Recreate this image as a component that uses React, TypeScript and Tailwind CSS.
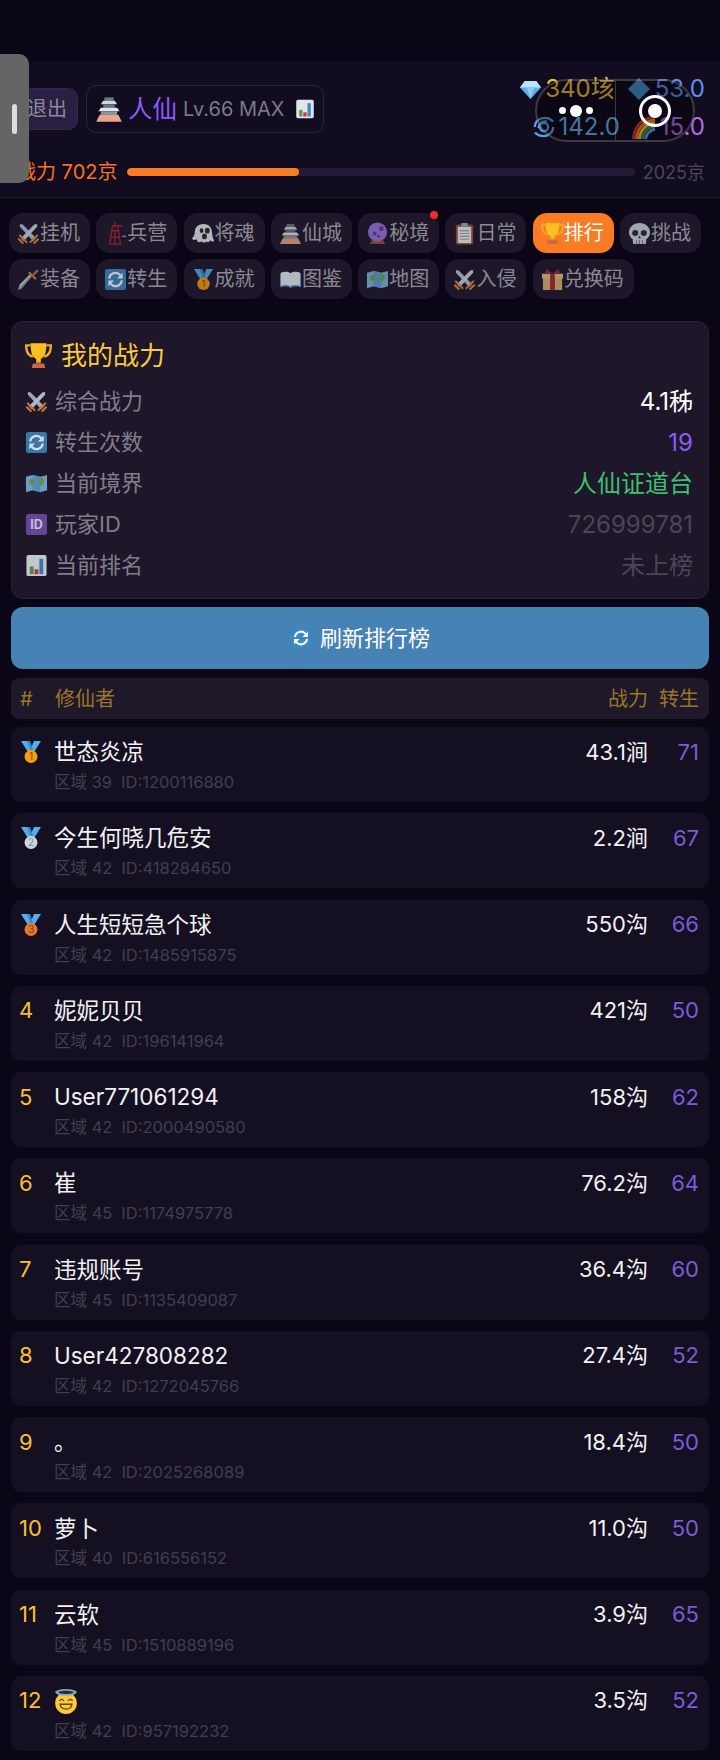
import React from "react"

type IconName =
  | "swords" | "tower" | "ghost" | "castle" | "ball" | "clipboard" | "trophy" | "skull"
  | "dagger" | "cycle" | "book" | "map" | "gift" | "id" | "chart" | "gem" | "diamond"
  | "swirl" | "rainbow" | "halo" | "medal1" | "medal2" | "medal3"

const medalFill: Record<string, string> = { "1": "#f59e0b", "2": "#ccd6dd", "3": "#e8762d" }

const Medal = ({ n }: { n: string }) => (
  <>
    <path d="M2 1h7l3 7 3-7h7l-7.500 12h-5z" fill="#55acee" />
    <path d="M8 1h3l3 8-2 3z" fill="#3b88c3" />
    <circle cx="12" cy="16.500" r="6.500" fill={medalFill[n]} />
    <text x="12" y="20" textAnchor="middle" fontSize="10" fill={n === "2" ? "#7b8a94" : "#7a4a06"} fontFamily="Inter">{n}</text>
  </>
)

const Icon = ({ name, className }: { name: IconName; className?: string }) => {
  return (
    <svg viewBox="0 0 24 24" className={className}>
      {name === "swords" && (
        <>
          <path d="M3 2l3 .5L20 17l-3 3L3 5z" fill="#b8c4d0" />
          <path d="M21 2l-3 .5L4 17l3 3L21 5z" fill="#ccd6dd" />
          <path d="M2 18l4 4M22 18l-4 4M3 14l7 7M21 14l-7 7" stroke="#d98a3d" strokeWidth="2.200" strokeLinecap="round" />
        </>
      )}
      {name === "tower" && (
        <>
          <path d="M9 4h5l1 5 1 7 1 7H6l1-7 1-7z" fill="none" stroke="#8f1f2e" strokeWidth="1.800" />
          <path d="M11.500 0v5M7 9h9M6 16h11M11.500 9v14M9 4h10" stroke="#a3222f" strokeWidth="1.600" />
          <path d="M19 15h4" stroke="#9a96a4" strokeWidth="1.600" />
        </>
      )}
      {name === "ghost" && (
        <>
          <path d="M12 2c6 0 9 4 9 10 0 4 2 6 2 8-2 1-3 0-4-1-1 2-3 3-4 1-1 2-4 2-5 0-2 2-5 1-5-2-2 1-4 1-5-1 2-2 3-4 3-7 0-5 4-8 9-8z" fill="#e8eaed" />
          <ellipse cx="10" cy="9" rx="2" ry="2.500" fill="#292f33" />
          <ellipse cx="16" cy="9" rx="2.500" ry="3" fill="#292f33" />
          <ellipse cx="13" cy="15" rx="2.500" ry="3" fill="#292f33" />
        </>
      )}
      {name === "castle" && (
        <>
          <path d="M8 2h8v3H8z" fill="#66757f" />
          <path d="M7 5h10l2 3H5z" fill="#ccd6dd" />
          <path d="M7 8h10v3H7z" fill="#66757f" />
          <path d="M5 11h14l2 3H3z" fill="#e1e8ed" />
          <path d="M5 14h14v3H5z" fill="#8899a6" />
          <path d="M4 17h16l3 6H1z" fill="#e8a68a" />
        </>
      )}
      {name === "ball" && (
        <>
          <path d="M6 19h12l2 4H4z" fill="#a0522d" />
          <circle cx="12" cy="10.500" r="10" fill="#9a75d8" />
          <circle cx="16" cy="7" r="2.500" fill="#5c3d99" />
          <circle cx="9" cy="12" r="2" fill="#5c3d99" />
          <circle cx="13" cy="15" r="1.500" fill="#5c3d99" />
        </>
      )}
      {name === "clipboard" && (
        <>
          <rect x="3" y="2.500" width="18" height="21" rx="2" fill="#a0522d" />
          <rect x="5" y="5" width="14" height="17" fill="#f1f2f3" />
          <rect x="8.500" y="1" width="7" height="4" rx="1" fill="#99aab5" />
          <path d="M7 9h10M7 12h10M7 15h10M7 18h10" stroke="#99aab5" strokeWidth="1.300" />
        </>
      )}
      {name === "trophy" && (
        <>
          <path d="M5 3H1c0 5 1 9 6 10M19 3h4c0 5-1 9-6 10" fill="none" stroke="#f5a623" strokeWidth="2.200" />
          <path d="M5 1h14c0 8-1 12-5 14v3h-4v-3C6 13 5 9 5 1z" fill="#fbbf24" />
          <path d="M10 17h4v2h-4z" fill="#e8961a" />
          <path d="M7 19h10l1 4H6z" fill="#c9694b" />
        </>
      )}
      {name === "skull" && (
        <>
          <path d="M12 1c6 0 11 4 11 10 0 3-2 6-4 7v3c0 1.500-1 2-2 2H7c-1 0-2-.5-2-2v-3c-2-1-4-4-4-7C1 5 6 1 12 1z" fill="#ccd6dd" />
          <circle cx="7.500" cy="11.500" r="3.200" fill="#292f33" />
          <circle cx="16.500" cy="11.500" r="3.200" fill="#292f33" />
          <path d="M12 14l-1.500 3h3z" fill="#292f33" />
          <path d="M9 19v4M12 19v4M15 19v4" stroke="#66757f" />
        </>
      )}
      {name === "dagger" && (
        <>
          <path d="M1 23l2-6 11-11 2 2L5 21z" fill="#c4ced6" />
          <path d="M1 23L15 7l1 1L5 21z" fill="#8899a6" />
          <path d="M13 5l6 6" stroke="#d98a3d" strokeWidth="2.200" strokeLinecap="round" />
          <path d="M16 8l5-5" stroke="#c1694f" strokeWidth="2.600" strokeLinecap="round" />
        </>
      )}
      {name === "cycle" && (
        <>
          <rect x="1" y="1" width="22" height="22" rx="2.500" fill="#3b88c3" />
          <path d="M5.500 11a6.500 6.500 0 0 1 11.500-3.500M18.500 13A6.500 6.500 0 0 1 7 16.500" fill="none" stroke="#fff" strokeWidth="2.300" />
          <path d="M19.500 5v6h-6zM4.500 19v-6h6z" fill="#fff" />
        </>
      )}
      {name === "book" && (
        <>
          <path d="M1 6c4-2 8-2 11 0 3-2 7-2 11 0v14c-4-1-8-1-11 1-3-2-7-2-11-1z" fill="#5b94c4" />
          <path d="M2 5c4-1.500 7-1.500 10 .5V19c-3-1.500-6-1.500-10-.5zM22 5c-4-1.500-7-1.500-10 .5V19c3-1.500 6-1.500 10-.5z" fill="#e9eef2" />
        </>
      )}
      {name === "map" && (
        <>
          <path d="M1 5l7-2 8 2 7-2v16l-7 2-8-2-7 2z" fill="#7fb4dc" />
          <path d="M8 3l8 2v16l-8-2z" fill="#5d9fd0" />
          <path d="M4 8l4-1 2 3-2 4-3-1zM14 7l5-1 1 5-4 4-2-3z" fill="#6aa55a" />
        </>
      )}
      {name === "gift" && (
        <>
          <rect x="2" y="9" width="20" height="14" fill="#dcb36d" />
          <rect x="1" y="6" width="22" height="5" fill="#e5c07b" />
          <rect x="9.500" y="6" width="5" height="17" fill="#a8283a" />
          <path d="M12 6L6 1 4 5zM12 6l6-5 2 4z" fill="#a8283a" />
        </>
      )}
      {name === "id" && (
        <>
          <rect x="1" y="1" width="22" height="22" rx="2.500" fill="#744eaa" />
          <text x="12" y="17" textAnchor="middle" fontSize="13" fontWeight="700" fill="#e6dff0" fontFamily="Inter">ID</text>
        </>
      )}
      {name === "chart" && (
        <>
          <rect x="1.500" y="1" width="21" height="22" rx="2" fill="#dfe5ea" />
          <rect x="5" y="13" width="4" height="8" fill="#5c9a4c" />
          <rect x="10" y="16" width="4" height="5" fill="#dd2e44" />
          <rect x="15" y="5" width="4" height="16" fill="#3b88c3" />
        </>
      )}
      {name === "gem" && (
        <>
          <path d="M6 3h12l5 7-11 12L1 10z" fill="#5dadec" />
          <path d="M6 3h12l5 7H1z" fill="#bde3fb" />
          <path d="M8 10h8l-4 12z" fill="#8ccaf7" />
        </>
      )}
      {name === "diamond" && <path d="M12 1l11 11-11 11L1 12z" fill="#4a8cc8" />}
      {name === "swirl" && (
        <g fill="none" stroke="#5aa2e0" strokeWidth="2.400">
          <path d="M2 12c0-6 5-10 11-10 4 0 7 2 9 4" />
          <path d="M22 12c0 6-5 10-11 10-4 0-7-2-9-4" />
          <circle cx="12" cy="12" r="4.500" />
          <path d="M6 13c0-5 4-8 9-7" />
        </g>
      )}
      {name === "rainbow" && (
        <g fill="none" strokeWidth="2.800">
          <path d="M1.500 24C2 12 9 3 23 2" stroke="#dd2e44" />
          <path d="M4.500 24C5 14 11 6 23 5" stroke="#f4900c" />
          <path d="M7.500 24C8 16 13 9 23 8" stroke="#ffcc4d" />
          <path d="M10.500 24C11 18 15 12 23 11" stroke="#5c913b" />
          <path d="M13.500 24c.5-4 4-9 9.500-10" stroke="#55acee" />
        </g>
      )}
      {name === "halo" && (
        <>
          <circle cx="12" cy="14" r="10" fill="#fcc83c" />
          <ellipse cx="12" cy="4" rx="10" ry="3" fill="#7fa8b8" />
          <ellipse cx="12" cy="4" rx="7" ry="1.500" fill="#2a2438" />
          <path d="M6 12c1-2 3-2 4 0M14 12c1-2 3-2 4 0" fill="none" stroke="#664500" strokeWidth="1.300" />
          <path d="M6.500 15c1 6 10 6 11 0z" fill="none" stroke="#664500" strokeWidth="1.300" />
        </>
      )}
      {name === "medal1" && <Medal n="1" />}
      {name === "medal2" && <Medal n="2" />}
      {name === "medal3" && <Medal n="3" />}
    </svg>
  )
}

const tabs: { icon: IconName; label: string; active?: boolean; dot?: boolean }[] = [
  { icon: "swords", label: "挂机" },
  { icon: "tower", label: "兵营" },
  { icon: "ghost", label: "将魂" },
  { icon: "castle", label: "仙城" },
  { icon: "ball", label: "秘境", dot: true },
  { icon: "clipboard", label: "日常" },
  { icon: "trophy", label: "排行", active: true },
  { icon: "skull", label: "挑战" },
  { icon: "dagger", label: "装备" },
  { icon: "cycle", label: "转生" },
  { icon: "medal1", label: "成就" },
  { icon: "book", label: "图鉴" },
  { icon: "map", label: "地图" },
  { icon: "swords", label: "入侵" },
  { icon: "gift", label: "兑换码" },
]

const stats: { icon: IconName; label: string; value: string; color: string }[] = [
  { icon: "swords", label: "综合战力", value: "4.1秭", color: "text-white" },
  { icon: "cycle", label: "转生次数", value: "19", color: "text-[#8b5cf6]" },
  { icon: "map", label: "当前境界", value: "人仙证道台", color: "text-[#3fbf6f]" },
  { icon: "id", label: "玩家ID", value: "726999781", color: "text-[#4b4656]" },
  { icon: "chart", label: "当前排名", value: "未上榜", color: "text-[#4b4656]" },
]

const players = [
  { name: "世态炎凉", zone: "区域 39", id: "ID:1200116880", power: "43.1涧", rebirth: "71" },
  { name: "今生何晓几危安", zone: "区域 42", id: "ID:418284650", power: "2.2涧", rebirth: "67" },
  { name: "人生短短急个球", zone: "区域 42", id: "ID:1485915875", power: "550沟", rebirth: "66" },
  { name: "妮妮贝贝", zone: "区域 42", id: "ID:196141964", power: "421沟", rebirth: "50" },
  { name: "User771061294", zone: "区域 42", id: "ID:2000490580", power: "158沟", rebirth: "62" },
  { name: "崔", zone: "区域 45", id: "ID:1174975778", power: "76.2沟", rebirth: "64" },
  { name: "违规账号", zone: "区域 45", id: "ID:1135409087", power: "36.4沟", rebirth: "60" },
  { name: "User427808282", zone: "区域 42", id: "ID:1272045766", power: "27.4沟", rebirth: "52" },
  { name: "。", zone: "区域 42", id: "ID:2025268089", power: "18.4沟", rebirth: "50" },
  { name: "萝卜", zone: "区域 40", id: "ID:616556152", power: "11.0沟", rebirth: "50" },
  { name: "云软", zone: "区域 45", id: "ID:1510889196", power: "3.9沟", rebirth: "65" },
  { name: "", zone: "区域 42", id: "ID:957192232", power: "3.5沟", rebirth: "52" },
]

const medals: IconName[] = ["medal1", "medal2", "medal3"]

export default function App() {
  return (
    <div className="relative w-[720px] h-[1760px] overflow-hidden bg-[#0a0616] font-['Inter','Noto_Sans_CJK_SC',sans-serif]">
      {/* Header */}
      <div className="mt-[62px] h-[136px] bg-[#110c1f] border-b border-[#231c33] pt-[8px]">
        <div className="flex justify-between pl-[11px] pr-[15px] h-[80px]">
          <div className="flex items-center gap-[8px] mt-[-2px]">
            <div className="h-[42px] w-[67px] rounded-[10px] bg-[#2a1f42] border border-[#33284d] text-[20px] leading-[40px] text-[#8d8a96] pl-[15px]">
              退出
            </div>
            <div className="h-[48px] w-[238px] rounded-[10px] border border-[#2a2340] flex items-center pl-[8px]">
              <Icon name="castle" className="w-[28px] h-[28px]" />
              <span className="ml-[5px] text-[24.500px] text-[#8b5cf6]">人仙</span>
              <span className="ml-[6px] text-[20px] text-[#7d7989]">Lv.66 MAX</span>
              <Icon name="chart" className="ml-[10px] w-[20px] h-[20px]" />
            </div>
          </div>
          <div className="flex flex-col items-end">
            <div className="flex items-center h-[38px] gap-[12px] text-[24px]">
              <div className="flex items-center gap-[3px] text-[#f2c23a]">
                <Icon name="gem" className="w-[23px] h-[23px]" />
                340垓
              </div>
              <div className="flex items-center gap-[4px] text-[#5f8fea]">
                <Icon name="diamond" className="w-[24px] h-[24px]" />
                53.0
              </div>
            </div>
            <div className="flex items-center h-[38px] gap-[12px] text-[24px]">
              <div className="flex items-center gap-[3px] text-[#6ab4ea]">
                <Icon name="swirl" className="w-[22px] h-[22px]" />
                142.0
              </div>
              <div className="flex items-center gap-[4px] text-[#b36be0]">
                <Icon name="rainbow" className="w-[24px] h-[24px]" />
                15.0
              </div>
            </div>
          </div>
        </div>
        <div className="flex items-center mt-[7px] pl-[16px] pr-[15px] text-[20px]">
          <span className="text-[#f97316]">战力 702京</span>
          <div className="flex-1 h-[8px] ml-[10px] rounded-full bg-[#241c36] overflow-hidden">
            <div className="w-[172px] h-full rounded-full bg-[#f97b23]" />
          </div>
          <span className="ml-[8px] text-[18px] text-[#4b4656]">2025京</span>
        </div>
      </div>

      {/* Tabs */}
      <div className="flex flex-wrap gap-x-[6.300px] gap-y-[6px] pl-[9px] pt-[15px]">
        {tabs.map((t) => (
          <div
            key={t.label}
            className={
              t.active
                ? "relative h-[40px] flex items-center pl-[8px] pr-[10px] rounded-[14px] bg-[#f97b23] text-[20px] text-white"
                : "relative h-[40px] flex items-center pl-[8px] pr-[10px] rounded-[14px] bg-[#1d1729] text-[20px] text-[#8b8794]"
            }
          >
            <Icon name={t.icon} className={t.active ? "w-[23px] h-[23px]" : "w-[23px] h-[23px] opacity-75"} />
            {t.label}
            {t.dot && <span className="absolute top-[-2px] right-[1px] w-[8px] h-[8px] rounded-full bg-[#ef2b2b]" />}
          </div>
        ))}
      </div>

      {/* My power */}
      <div className="mx-[11px] mt-[22px] h-[278px] rounded-[12px] bg-[#1d1729] border border-[#2a2340] px-[13px] pt-[15px]">
        <div className="flex items-center h-[36px] text-[26px] text-[#fcc93e]">
          <Icon name="trophy" className="w-[27px] h-[27px] mr-[9px]" />
          我的战力
        </div>
        <div className="mt-[8px] flex flex-col">
          {stats.map((s) => (
            <div key={s.label} className="flex items-center justify-between h-[41px] text-[24px] pr-[2px]">
              <div className="flex items-center text-[#827d8e] text-[22px]">
                <Icon name={s.icon} className="w-[23px] h-[23px] mr-[7px] opacity-85" />
                {s.label}
              </div>
              <span className={s.color}>{s.value}</span>
            </div>
          ))}
        </div>
      </div>

      {/* Refresh */}
      <div className="mx-[11px] mt-[8px] h-[62px] rounded-[12px] bg-[#4682b4] flex items-center justify-center text-[22px] text-white">
        <Icon name="cycle" className="w-[22px] h-[22px] mr-[8px]" />
        刷新排行榜
      </div>

      {/* Table head */}
      <div className="mx-[11px] mt-[9px] h-[41px] rounded-[8px] bg-[#1e1829] flex items-center pl-[9px] pr-[10px] text-[20px] text-[#9a7528]">
        <span className="w-[35px]">#</span>
        <span className="flex-1">修仙者</span>
        <span className="mr-[-1px]">战力</span>
        <span className="ml-[12px]">转生</span>
      </div>

      {/* Players */}
      <div className="mx-[11px] mt-[8px] flex flex-col gap-[11.270px]">
        {players.map((p, i) => (
          <div key={p.id} className="h-[75px] rounded-[10px] bg-[#141022] flex pl-[8px] pr-[10px] pt-[9px]">
            <div className="w-[35px] h-[32px] flex items-center text-[22px] text-[#fbc02d]">
              {i < 3 ? <Icon name={medals[i]} className="w-[24px] h-[24px]" /> : i + 1}
            </div>
            <div className="flex-1">
              <div className="h-[32px] flex items-center text-[22.500px] text-[#f2f2f2]">
                {p.name || <Icon name="halo" className="ml-[-1px] w-[26px] h-[26px]" />}
              </div>
              <div className="mt-[4px] text-[16.500px] leading-[20px] text-[#423e4c]">
                {p.zone}
                <span className="ml-[9px]">{p.id}</span>
              </div>
            </div>
            <div className="h-[32px] flex items-center text-[22px] text-[#f2f2f2]">{p.power}</div>
            <div className="w-[51px] h-[32px] flex items-center justify-end text-[22px] text-[#7c5bd6]">{p.rebirth}</div>
          </div>
        ))}
      </div>

      {/* Mini-program capsule */}
      <div className="absolute left-[535px] top-[79px] w-[160px] h-[63px] rounded-full border-2 border-white/20 bg-black/35 flex">
        <div className="w-[79px] border-r border-white/20 flex items-center justify-center gap-[4px]">
          <span className="w-[7px] h-[7px] rounded-full bg-white" />
          <span className="w-[12px] h-[12px] rounded-full bg-white" />
          <span className="w-[7px] h-[7px] rounded-full bg-white" />
        </div>
        <div className="flex-1 flex items-center justify-center">
          <div className="w-[32px] h-[32px] rounded-full border-[3px] border-white flex items-center justify-center">
            <span className="w-[14px] h-[14px] rounded-full bg-white" />
          </div>
        </div>
      </div>

      {/* Floating side handle */}
      <div className="absolute left-0 top-[54px] w-[29px] h-[129px] rounded-r-[10px] bg-[#656565] flex items-center pl-[12px]">
        <div className="w-[5px] h-[30px] rounded-full bg-[#dddddd]" />
      </div>
    </div>
  )
}
